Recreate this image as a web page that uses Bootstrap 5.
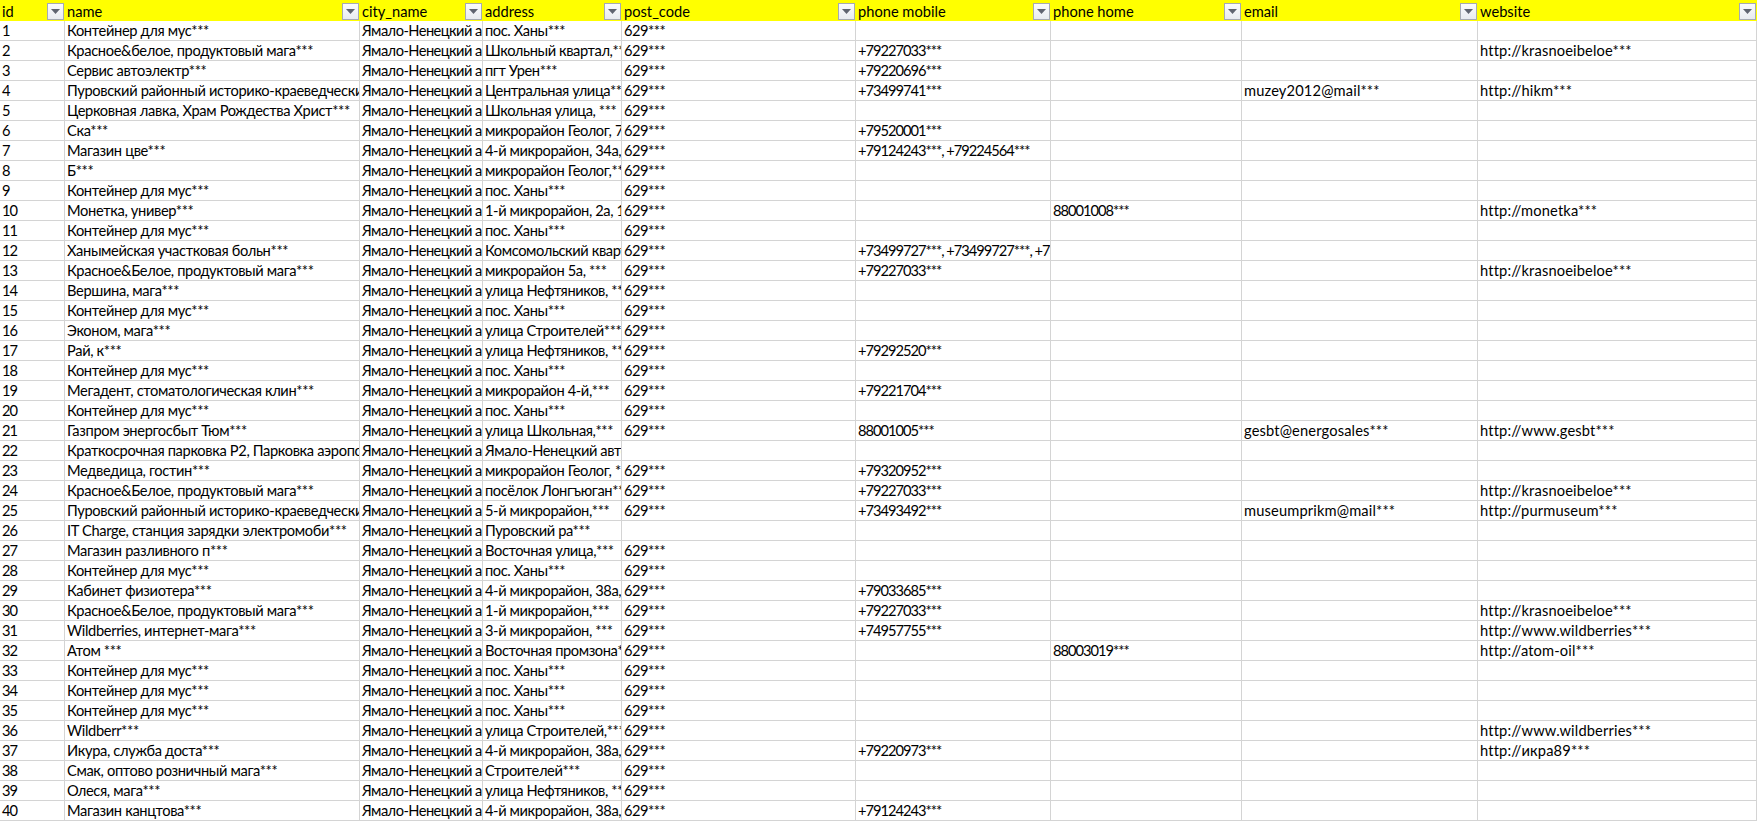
<!DOCTYPE html>
<html lang="ru">
<head>
<meta charset="utf-8">
<title>Sheet</title>
<link href="https://cdn.jsdelivr.net/npm/bootstrap@5.3.0/dist/css/bootstrap.min.css" rel="stylesheet">
<style>
html,body{margin:0;background:#fff;overflow:hidden}
.sheet{table-layout:fixed;width:1757px;border-collapse:separate;border-spacing:0;font-family:"Lato","Liberation Sans",sans-serif;font-size:14.67px;line-height:19px;color:#000}
.sheet>:not(caption)>*>*{padding:0 0 0 2px;border:0;border-right:1px solid #d4d4d4;border-bottom:1px solid #d4d4d4;height:20px;white-space:nowrap;overflow:hidden;box-shadow:none;background:#fff;color:#000;font-weight:400;vertical-align:middle}
.sheet>thead>tr>th{background:#ff0;height:21px;border-right:0;border-bottom:0;padding:1px 1px 0 2px}
.sheet td:nth-child(1){letter-spacing:-1px}
.sheet td:nth-child(2){letter-spacing:-.35px}
.sheet td:nth-child(3){letter-spacing:-.55px}
.sheet td:nth-child(4){letter-spacing:-.4px}
.sheet td:nth-child(5){letter-spacing:-.5px}
.sheet td:nth-child(6),.sheet td:nth-child(7){letter-spacing:-1px}
.sheet td:nth-child(8),.sheet td:nth-child(9){letter-spacing:.15px}
.headcell{height:20px}
.fbtn{width:17px;height:17px;flex:none;border:1px solid #a5aab3;background:linear-gradient(#fbfcfd,#e8ebf0);display:flex;align-items:center;justify-content:center}
.fbtn svg{display:block}
</style>
</head>
<body>
<table class="table sheet mb-0">
<colgroup><col style="width:65px"><col style="width:295px"><col style="width:123px"><col style="width:139px"><col style="width:234px"><col style="width:195px"><col style="width:191px"><col style="width:236px"><col style="width:279px"></colgroup>
<thead><tr>
<th><div class="headcell d-flex justify-content-between align-items-center"><span>id</span><span class="fbtn"><svg width="9" height="5" viewBox="0 0 9 5"><path d="M0 0h9L4.500 5z" fill="#5f6470"/></svg></span></div></th>
<th><div class="headcell d-flex justify-content-between align-items-center"><span>name</span><span class="fbtn"><svg width="9" height="5" viewBox="0 0 9 5"><path d="M0 0h9L4.500 5z" fill="#5f6470"/></svg></span></div></th>
<th><div class="headcell d-flex justify-content-between align-items-center"><span>city_name</span><span class="fbtn"><svg width="9" height="5" viewBox="0 0 9 5"><path d="M0 0h9L4.500 5z" fill="#5f6470"/></svg></span></div></th>
<th><div class="headcell d-flex justify-content-between align-items-center"><span>address</span><span class="fbtn"><svg width="9" height="5" viewBox="0 0 9 5"><path d="M0 0h9L4.500 5z" fill="#5f6470"/></svg></span></div></th>
<th><div class="headcell d-flex justify-content-between align-items-center"><span>post_code</span><span class="fbtn"><svg width="9" height="5" viewBox="0 0 9 5"><path d="M0 0h9L4.500 5z" fill="#5f6470"/></svg></span></div></th>
<th><div class="headcell d-flex justify-content-between align-items-center"><span>phone mobile</span><span class="fbtn"><svg width="9" height="5" viewBox="0 0 9 5"><path d="M0 0h9L4.500 5z" fill="#5f6470"/></svg></span></div></th>
<th><div class="headcell d-flex justify-content-between align-items-center"><span>phone home</span><span class="fbtn"><svg width="9" height="5" viewBox="0 0 9 5"><path d="M0 0h9L4.500 5z" fill="#5f6470"/></svg></span></div></th>
<th><div class="headcell d-flex justify-content-between align-items-center"><span>email</span><span class="fbtn"><svg width="9" height="5" viewBox="0 0 9 5"><path d="M0 0h9L4.500 5z" fill="#5f6470"/></svg></span></div></th>
<th><div class="headcell d-flex justify-content-between align-items-center"><span>website</span><span class="fbtn"><svg width="9" height="5" viewBox="0 0 9 5"><path d="M0 0h9L4.500 5z" fill="#5f6470"/></svg></span></div></th>
</tr></thead>
<tbody>
<tr><td>1</td><td>Контейнер для мус***</td><td>Ямало-Ненецкий автономный</td><td>пос. Ханы***</td><td>629***</td><td></td><td></td><td></td><td></td></tr>
<tr><td>2</td><td>Красное&amp;белое, продуктовый мага***</td><td>Ямало-Ненецкий автономный</td><td>Школьный квартал,***</td><td>629***</td><td>+79227033***</td><td></td><td></td><td>http://krasnoeibeloe***</td></tr>
<tr><td>3</td><td>Сервис автоэлектр***</td><td>Ямало-Ненецкий автономный</td><td>пгт Урен***</td><td>629***</td><td>+79220696***</td><td></td><td></td><td></td></tr>
<tr><td>4</td><td>Пуровский районный историко-краеведческий музей</td><td>Ямало-Ненецкий автономный</td><td>Центральная улица***</td><td>629***</td><td>+73499741***</td><td></td><td>muzey2012@mail***</td><td>http://hikm***</td></tr>
<tr><td>5</td><td>Церковная лавка, Храм Рождества Христ***</td><td>Ямало-Ненецкий автономный</td><td>Школьная улица, ***</td><td>629***</td><td></td><td></td><td></td><td></td></tr>
<tr><td>6</td><td>Ска***</td><td>Ямало-Ненецкий автономный</td><td>микрорайон Геолог, 7***</td><td>629***</td><td>+79520001***</td><td></td><td></td><td></td></tr>
<tr><td>7</td><td>Магазин цве***</td><td>Ямало-Ненецкий автономный</td><td>4-й микрорайон, 34а, ***</td><td>629***</td><td>+79124243***, +79224564***</td><td></td><td></td><td></td></tr>
<tr><td>8</td><td>Б***</td><td>Ямало-Ненецкий автономный</td><td>микрорайон Геолог,***</td><td>629***</td><td></td><td></td><td></td><td></td></tr>
<tr><td>9</td><td>Контейнер для мус***</td><td>Ямало-Ненецкий автономный</td><td>пос. Ханы***</td><td>629***</td><td></td><td></td><td></td><td></td></tr>
<tr><td>10</td><td>Монетка, универ***</td><td>Ямало-Ненецкий автономный</td><td>1-й микрорайон, 2а, 1***</td><td>629***</td><td></td><td>88001008***</td><td></td><td>http://monetka***</td></tr>
<tr><td>11</td><td>Контейнер для мус***</td><td>Ямало-Ненецкий автономный</td><td>пос. Ханы***</td><td>629***</td><td></td><td></td><td></td><td></td></tr>
<tr><td>12</td><td>Ханымейская участковая больн***</td><td>Ямало-Ненецкий автономный</td><td>Комсомольский квартал</td><td>629***</td><td>+73499727***, +73499727***, +73499727***</td><td></td><td></td><td></td></tr>
<tr><td>13</td><td>Красное&amp;Белое, продуктовый мага***</td><td>Ямало-Ненецкий автономный</td><td>микрорайон 5а, ***</td><td>629***</td><td>+79227033***</td><td></td><td></td><td>http://krasnoeibeloe***</td></tr>
<tr><td>14</td><td>Вершина, мага***</td><td>Ямало-Ненецкий автономный</td><td>улица Нефтяников, ***</td><td>629***</td><td></td><td></td><td></td><td></td></tr>
<tr><td>15</td><td>Контейнер для мус***</td><td>Ямало-Ненецкий автономный</td><td>пос. Ханы***</td><td>629***</td><td></td><td></td><td></td><td></td></tr>
<tr><td>16</td><td>Эконом, мага***</td><td>Ямало-Ненецкий автономный</td><td>улица Строителей***</td><td>629***</td><td></td><td></td><td></td><td></td></tr>
<tr><td>17</td><td>Рай, к***</td><td>Ямало-Ненецкий автономный</td><td>улица Нефтяников, ***</td><td>629***</td><td>+79292520***</td><td></td><td></td><td></td></tr>
<tr><td>18</td><td>Контейнер для мус***</td><td>Ямало-Ненецкий автономный</td><td>пос. Ханы***</td><td>629***</td><td></td><td></td><td></td><td></td></tr>
<tr><td>19</td><td>Мегадент, стоматологическая клин***</td><td>Ямало-Ненецкий автономный</td><td>микрорайон 4-й,***</td><td>629***</td><td>+79221704***</td><td></td><td></td><td></td></tr>
<tr><td>20</td><td>Контейнер для мус***</td><td>Ямало-Ненецкий автономный</td><td>пос. Ханы***</td><td>629***</td><td></td><td></td><td></td><td></td></tr>
<tr><td>21</td><td>Газпром энергосбыт Тюм***</td><td>Ямало-Ненецкий автономный</td><td>улица Школьная,***</td><td>629***</td><td>88001005***</td><td></td><td>gesbt@energosales***</td><td>http://www.gesbt***</td></tr>
<tr><td>22</td><td>Краткосрочная парковка Р2, Парковка аэропорта</td><td>Ямало-Ненецкий автономный</td><td>Ямало-Ненецкий автономный</td><td></td><td></td><td></td><td></td><td></td></tr>
<tr><td>23</td><td>Медведица, гостин***</td><td>Ямало-Ненецкий автономный</td><td>микрорайон Геолог, ***</td><td>629***</td><td>+79320952***</td><td></td><td></td><td></td></tr>
<tr><td>24</td><td>Красное&amp;Белое, продуктовый мага***</td><td>Ямало-Ненецкий автономный</td><td>посёлок Лонгъюган***</td><td>629***</td><td>+79227033***</td><td></td><td></td><td>http://krasnoeibeloe***</td></tr>
<tr><td>25</td><td>Пуровский районный историко-краеведческий музей</td><td>Ямало-Ненецкий автономный</td><td>5-й микрорайон,***</td><td>629***</td><td>+73493492***</td><td></td><td>museumprikm@mail***</td><td>http://purmuseum***</td></tr>
<tr><td>26</td><td>IT Charge, станция зарядки электромоби***</td><td>Ямало-Ненецкий автономный</td><td>Пуровский ра***</td><td></td><td></td><td></td><td></td><td></td></tr>
<tr><td>27</td><td>Магазин разливного п***</td><td>Ямало-Ненецкий автономный</td><td>Восточная улица,***</td><td>629***</td><td></td><td></td><td></td><td></td></tr>
<tr><td>28</td><td>Контейнер для мус***</td><td>Ямало-Ненецкий автономный</td><td>пос. Ханы***</td><td>629***</td><td></td><td></td><td></td><td></td></tr>
<tr><td>29</td><td>Кабинет физиотера***</td><td>Ямало-Ненецкий автономный</td><td>4-й микрорайон, 38а, ***</td><td>629***</td><td>+79033685***</td><td></td><td></td><td></td></tr>
<tr><td>30</td><td>Красное&amp;Белое, продуктовый мага***</td><td>Ямало-Ненецкий автономный</td><td>1-й микрорайон,***</td><td>629***</td><td>+79227033***</td><td></td><td></td><td>http://krasnoeibeloe***</td></tr>
<tr><td>31</td><td>Wildberries, интернет-мага***</td><td>Ямало-Ненецкий автономный</td><td>3-й микрорайон, ***</td><td>629***</td><td>+74957755***</td><td></td><td></td><td>http://www.wildberries***</td></tr>
<tr><td>32</td><td>Атом ***</td><td>Ямало-Ненецкий автономный</td><td>Восточная промзона***</td><td>629***</td><td></td><td>88003019***</td><td></td><td>http://atom-oil***</td></tr>
<tr><td>33</td><td>Контейнер для мус***</td><td>Ямало-Ненецкий автономный</td><td>пос. Ханы***</td><td>629***</td><td></td><td></td><td></td><td></td></tr>
<tr><td>34</td><td>Контейнер для мус***</td><td>Ямало-Ненецкий автономный</td><td>пос. Ханы***</td><td>629***</td><td></td><td></td><td></td><td></td></tr>
<tr><td>35</td><td>Контейнер для мус***</td><td>Ямало-Ненецкий автономный</td><td>пос. Ханы***</td><td>629***</td><td></td><td></td><td></td><td></td></tr>
<tr><td>36</td><td>Wildberr***</td><td>Ямало-Ненецкий автономный</td><td>улица Строителей,***</td><td>629***</td><td></td><td></td><td></td><td>http://www.wildberries***</td></tr>
<tr><td>37</td><td>Икура, служба доста***</td><td>Ямало-Ненецкий автономный</td><td>4-й микрорайон, 38а, ***</td><td>629***</td><td>+79220973***</td><td></td><td></td><td>http://икра89***</td></tr>
<tr><td>38</td><td>Смак, оптово розничный мага***</td><td>Ямало-Ненецкий автономный</td><td>Строителей***</td><td>629***</td><td></td><td></td><td></td><td></td></tr>
<tr><td>39</td><td>Олеся, мага***</td><td>Ямало-Ненецкий автономный</td><td>улица Нефтяников, ***</td><td>629***</td><td></td><td></td><td></td><td></td></tr>
<tr><td>40</td><td>Магазин канцтова***</td><td>Ямало-Ненецкий автономный</td><td>4-й микрорайон, 38а, ***</td><td>629***</td><td>+79124243***</td><td></td><td></td><td></td></tr>
</tbody>
</table>
<script src="https://cdn.jsdelivr.net/npm/bootstrap@5.3.0/dist/js/bootstrap.bundle.min.js"></script>
</body>
</html>
